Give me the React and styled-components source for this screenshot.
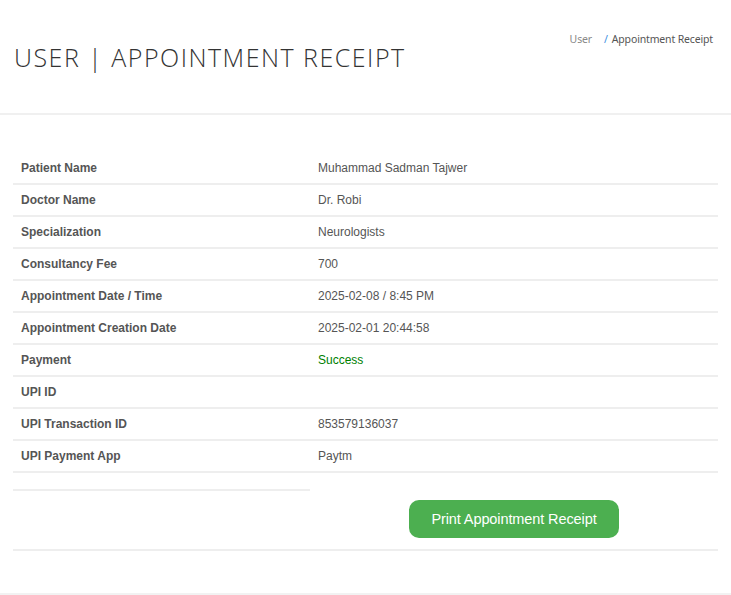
import React from "react";
import styled, { createGlobalStyle } from "styled-components";

const GlobalStyle = createGlobalStyle`
  body {
    margin: 0;
    background: #fff;
    font-family: "Liberation Sans", Arial, sans-serif;
  }
`;

const Page = styled.div`
  width: 731px;
  min-height: 595px;
  border-bottom: 2px solid #f2f2f2;
  box-sizing: border-box;
`;

const Header = styled.header`
  display: flex;
  justify-content: space-between;
  align-items: flex-start;
  height: 115px;
  padding: 0 18px 0 14px;
  border-bottom: 2px solid #f0f0f0;
  box-sizing: border-box;
`;

const Title = styled.h1`
  margin: 40px 0 0;
  font-family: "Open Sans", Lato, sans-serif;
  font-weight: 300;
  font-size: 25px;
  letter-spacing: 1.5px;
  color: #333;
`;

const Breadcrumb = styled.div`
  display: flex;
  gap: 12px;
  margin-top: 32px;
  font-family: "Noto Sans", sans-serif;
  font-size: 10.5px;
  letter-spacing: -0.15px;
`;

const Crumb = styled.span`
  color: ${(p) => (p.muted ? "#888" : "#555")};
`;

const Slash = styled.span`
  color: #3b8fe0;
  margin-right: 4px;
`;

const Body = styled.section`
  padding: 38px 13px 0;
`;

const Table = styled.div`
  display: grid;
  grid-template-columns: 297px 1fr;
`;

const Cell = styled.div`
  height: 32px;
  display: flex;
  align-items: center;
  padding: 0 8px;
  border-bottom: 2px solid #eeeeee;
  box-sizing: border-box;
  font-size: 12px;
  font-weight: ${(p) => (p.label ? 700 : 400)};
  color: ${(p) => p.color || "#555"};
`;

const Footer = styled.div`
  display: grid;
  grid-template-columns: 297px 1fr;
  border-bottom: 2px solid #eeeeee;
`;

const EmptyCell = styled.div`
  height: 16px;
  border-bottom: 2px solid #eeeeee;
`;

const ActionCell = styled.div`
  display: flex;
  justify-content: center;
  padding: 27px 0 11px;
`;

const PrintButton = styled.button`
  width: 210px;
  height: 38px;
  border: none;
  border-radius: 10px;
  background: #4caf50;
  color: #fff;
  font-family: "Liberation Sans", Arial, sans-serif;
  font-size: 14.5px;
  letter-spacing: -0.1px;
  cursor: pointer;
`;

const rows = [
  ["Patient Name", "Muhammad Sadman Tajwer"],
  ["Doctor Name", "Dr. Robi"],
  ["Specialization", "Neurologists"],
  ["Consultancy Fee", "700"],
  ["Appointment Date / Time", "2025-02-08 / 8:45 PM"],
  ["Appointment Creation Date", "2025-02-01 20:44:58"],
  ["Payment", "Success", "#008000"],
  ["UPI ID", ""],
  ["UPI Transaction ID", "853579136037"],
  ["UPI Payment App", "Paytm"],
];

export default function App() {
  return (
    <Page>
      <GlobalStyle />
      <Header>
        <Title>USER | APPOINTMENT RECEIPT</Title>
        <Breadcrumb>
          <Crumb muted>User</Crumb>
          <Crumb>
            <Slash>/</Slash>Appointment Receipt
          </Crumb>
        </Breadcrumb>
      </Header>
      <Body>
        <Table>
          {rows.map(([label, value, color]) => (
            <React.Fragment key={label}>
              <Cell label>{label}</Cell>
              <Cell color={color}>{value}</Cell>
            </React.Fragment>
          ))}
        </Table>
        <Footer>
          <EmptyCell />
          <ActionCell>
            <PrintButton onClick={() => window.print()}>
              Print Appointment Receipt
            </PrintButton>
          </ActionCell>
        </Footer>
      </Body>
    </Page>
  );
}
